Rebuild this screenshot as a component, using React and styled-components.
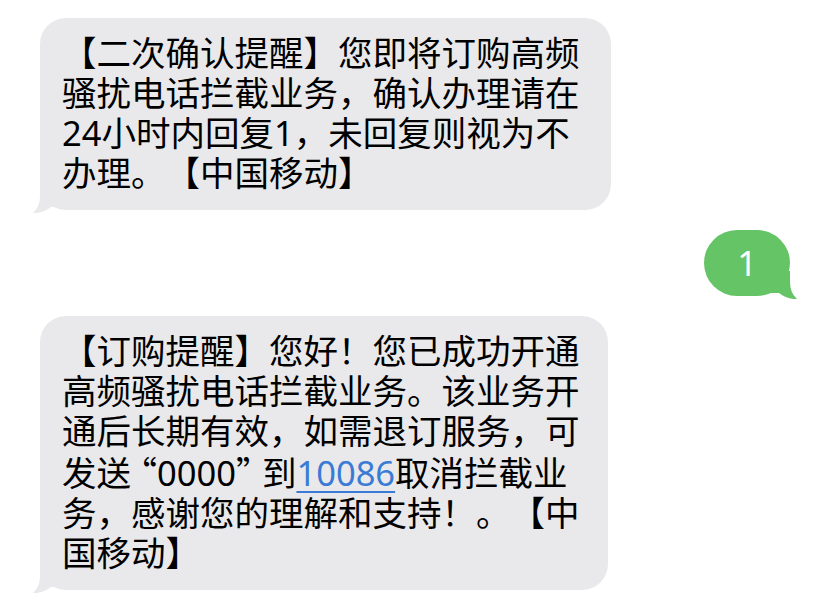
import React from "react";
import styled, { createGlobalStyle } from "styled-components";

const GlobalStyle = createGlobalStyle`
	html, body {
		margin: 0;
		padding: 0;
		background: #ffffff;
	}
	body {
		font-family: "Noto Sans", "Noto Sans CJK SC", sans-serif;
	}
`;

const Thread = styled.div`
	width: 826px;
	height: 608px;
	box-sizing: border-box;
	padding: 18px 36px 0 40px;
	display: flex;
	flex-direction: column;
	gap: 20px;
	background: #ffffff;
	overflow: hidden;
`;

const Row = styled.div`
	display: flex;
	justify-content: ${(p) => (p.$mine ? "flex-end" : "flex-start")};
`;

const Bubble = styled.div`
	position: relative;
	box-sizing: border-box;
	width: ${(p) => p.$width || "auto"};
	background: ${(p) => (p.$mine ? "#65c466" : "#e9e9eb")};
	color: ${(p) => (p.$mine ? "#ffffff" : "#000000")};
	border-radius: ${(p) => (p.$mine ? "33px" : "26px")};
	padding: ${(p) => (p.$mine ? "13px 33px" : "15px 20px 17px 22px")};
	font-size: 34.5px;
	line-height: 40px;
	white-space: nowrap;
	text-spacing-trim: space-all;
`;

const Text = styled.span`
	position: relative;
	z-index: 1;
`;

/* CJK quotes are full width; the reference sets them a bit tighter */
const Quote = styled.span`
	font-family: "Noto Sans CJK SC", sans-serif;
	${(p) => (p.$close ? "margin-right: -8.5px;" : "margin-left: -8.5px;")}
`;

const Tail = styled.svg`
	position: absolute;
	bottom: -3px;
	width: 28px;
	height: 28px;
	${(p) => (p.$mine ? "right: -7px;" : "left: -7px;")}
`;

const Link = styled.span`
	color: #3a7bd5;
	text-decoration: underline;
	text-decoration-thickness: 1.5px;
	text-underline-offset: 5px;
`;

const BubbleTail = ({ mine }) => (
	<Tail $mine={mine} viewBox="0 0 28 28">
		{mine ? (
			<path d="M21 0 L21 10 C21 18 23 23 28 28 C21 28.5 15 26 10 22 L0 22 L0 0 Z" fill="#65c466" />
		) : (
			<path d="M7 0 L7 10 C7 18 5 23 0 28 C7 28.5 13 26 18 22 L28 22 L28 0 Z" fill="#e9e9eb" />
		)}
	</Tail>
);

export default function App() {
	return (
		<>
			<GlobalStyle />
			<Thread>
				<Row>
					<Bubble $width="571px">
						<BubbleTail />
						<Text>
							【二次确认提醒】您即将订购高频
							<br />
							骚扰电话拦截业务，确认办理请在
							<br />
							24小时内回复1，未回复则视为不
							<br />
							办理。【中国移动】
						</Text>
					</Bubble>
				</Row>
				<Row $mine>
					<Bubble $mine>
						<BubbleTail mine />
						<Text>1</Text>
					</Bubble>
				</Row>
				<Row>
					<Bubble $width="568px">
						<BubbleTail />
						<Text>
							【订购提醒】您好！您已成功开通
							<br />
							高频骚扰电话拦截业务。该业务开
							<br />
							通后长期有效，如需退订服务，可
							<br />
							发送<Quote>“</Quote>0000<Quote $close>”</Quote>到<Link>10086</Link>取消拦截业
							<br />
							务，感谢您的理解和支持！。【中
							<br />
							国移动】
						</Text>
					</Bubble>
				</Row>
			</Thread>
		</>
	);
}
